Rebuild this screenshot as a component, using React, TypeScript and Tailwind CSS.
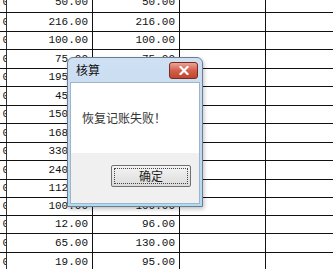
const rows: { h: string; a: string; b: string }[] = [
  { h: "h-[20px] -mt-[7px]", a: "50.00", b: "50.00" },
  { h: "h-[19px]", a: "216.00", b: "216.00" },
  { h: "h-[18px]", a: "100.00", b: "100.00" },
  { h: "h-[19px]", a: "75.00", b: "75.00" },
  { h: "h-[18px]", a: "195.00", b: "195.00" },
  { h: "h-[19px]", a: "45.00", b: "90.00" },
  { h: "h-[18px]", a: "150.00", b: "150.00" },
  { h: "h-[19px]", a: "168.00", b: "168.00" },
  { h: "h-[18px]", a: "330.00", b: "330.00" },
  { h: "h-[19px]", a: "240.00", b: "240.00" },
  { h: "h-[18px]", a: "112.00", b: "112.00" },
  { h: "h-[18px]", a: "100.00", b: "100.00" },
  { h: "h-[18px]", a: "12.00", b: "96.00" },
  { h: "h-[19px]", a: "65.00", b: "130.00" },
  { h: "h-[20px]", a: "19.00", b: "95.00" },
];

const num = "flex items-center justify-end pr-[4px] border-r border-[#111]";

const App = () => {
  return (
    <div className="relative w-[333px] h-[269px] overflow-hidden bg-white text-[#111] font-['Liberation_Mono',monospace] text-[11px]">
      {/* sheet */}
      <div className="flex flex-col">
        {rows.map((r, i) => (
          <div key={i} className={`${r.h} flex border-b border-[#111]`}>
            <div className="w-[7px] flex items-center justify-end border-r border-[#333] overflow-hidden">
              <span className="-mr-[3px]">0</span>
            </div>
            <div className={`w-[86px] ${num}`}>{r.a}</div>
            <div className={`w-[87px] ${num}`}>{r.b}</div>
            <div className="w-[86px] border-r border-[#111]" />
            <div className="flex-1" />
          </div>
        ))}
      </div>

      {/* message box */}
      <div className="absolute left-[67px] top-[57px] w-[136px] h-[150px] rounded-t-[6px] border border-[#6b7d91] bg-gradient-to-b from-[#cfe0f3] via-[#c2d8ef] to-[#b0dcf3] shadow-[1px_2px_4px_rgba(0,0,0,0.25)] flex flex-col">
        <div className="h-[24px] flex items-center justify-between pl-[8px] pr-[4px] font-['Noto_Sans_CJK_SC',sans-serif] text-[12px]">
          <span className="leading-none">核算</span>
          <div className="w-[29px] h-[17px] rounded-[3px] border border-[#7a2a1f] bg-gradient-to-b from-[#e9a396] via-[#d2604c] to-[#c1452f] flex items-center justify-center">
            <svg width="10" height="9" viewBox="0 0 10 9">
              <path d="M1.5 1 L8.5 8 M8.5 1 L1.5 8" stroke="#fff" strokeWidth="2.2" strokeLinecap="square" />
            </svg>
          </div>
        </div>
        <div className="flex-1 mx-[2px] mb-[2px] border border-[#9fb3c9] flex flex-col font-['Noto_Sans_CJK_SC',sans-serif] text-[12px]">
          <div className="h-[70px] bg-white flex items-center pl-[11px] text-[#333]">
            恢复记账失败！
          </div>
          <div className="flex-1 bg-[#f0f0f0] flex justify-end pr-[8px] pt-[12px]">
            <div className="w-[80px] h-[22px] rounded-[2px] border border-[#707070] bg-gradient-to-b from-[#f4f4f4] to-[#dcdcdc] p-[2px]">
              <div className="w-full h-full border border-dotted border-[#444] flex items-center justify-center leading-none text-[#222]">
                确定
              </div>
            </div>
          </div>
        </div>
      </div>
    </div>
  );
};

export default App;
